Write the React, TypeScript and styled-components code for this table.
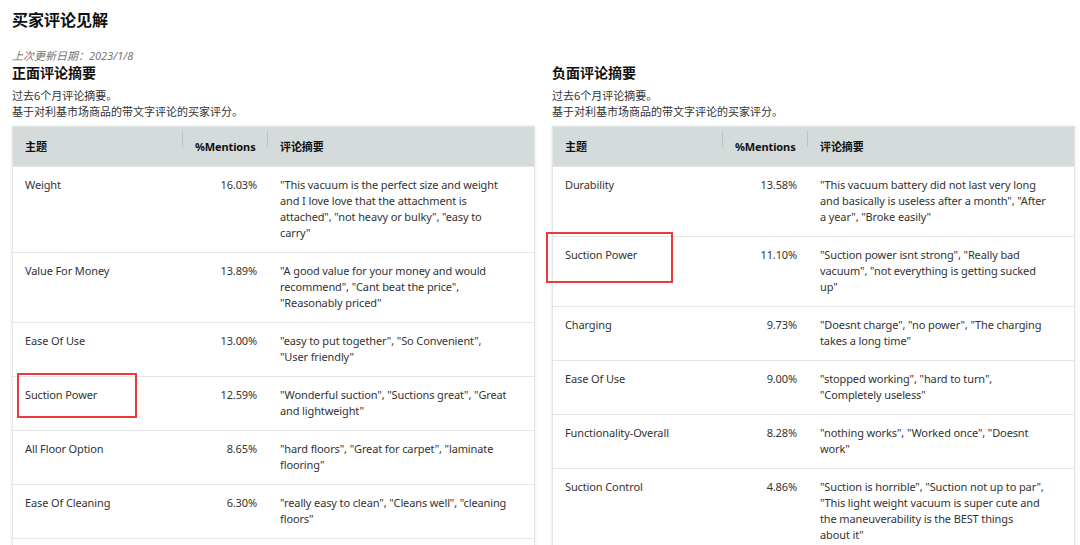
import React from "react";
import styled, { createGlobalStyle } from "styled-components";

type Row = {
  topic: string;
  pct: string;
  summary: string;
  mark?: { left: number; top: number; width: number; height: number };
};

const GlobalStyle = createGlobalStyle`
  body {
    margin: 0;
    background: #ffffff;
    font-family: "Noto Sans", "Noto Sans CJK SC", sans-serif;
    color: #0f1111;
  }
`;

const Page = styled.div`
  padding: 9px 5px 0 12px;
  width: 1080px;
  box-sizing: border-box;
`;

const Title = styled.h2`
  margin: 0;
  font-size: 16px;
  line-height: 22px;
  font-weight: 700;
  color: #0f1111;
`;

const UpdatedAt = styled.div`
  margin-top: 18px;
  font-size: 11px;
  line-height: 14px;
  font-style: italic;
  color: #767676;
`;

const Columns = styled.div`
  display: grid;
  grid-template-columns: 523px 523px;
  column-gap: 17px;
`;

const Section = styled.section`
  display: flex;
  flex-direction: column;
`;

const SectionTitle = styled.h3`
  margin: 0;
  font-size: 14px;
  line-height: 19px;
  font-weight: 700;
  color: #0f1111;
`;

const Desc = styled.p`
  margin: 6px 0 6px;
  font-size: 11px;
  line-height: 16px;
  color: #333333;
`;

// table stretches so both panels run down to the same bottom
const Table = styled.div`
  flex: 1;
  border: 1px solid #e3e6e6;
  border-bottom: none;
  box-shadow: 0 0 3px rgba(0, 0, 0, 0.12);
  background: #ffffff;
`;

const TableRow = styled.div<{ $head?: boolean }>`
  display: grid;
  grid-template-columns: 170px 85px 1fr;
  background: ${(p) => (p.$head ? "#d5dbdb" : "#ffffff")};
  border-top: ${(p) => (p.$head ? "none" : "1px solid #e3e6e6")};
  ${(p) => (p.$head ? "height: 39px; align-items: center;" : "")}
  font-size: 11px;
  line-height: 16px;
  letter-spacing: -0.12px;
  &:last-child {
    border-bottom: 1px solid #e3e6e6;
  }
`;

const HeadCell = styled.div<{ $align?: string; $divider?: boolean }>`
  position: relative;
  font-weight: 700;
  color: #0f1111;
  text-align: ${(p) => p.$align || "left"};
  padding: 0 ${(p) => (p.$align === "right" ? "14px" : "12px")} 0 12px;
  &::before {
    content: "";
    display: ${(p) => (p.$divider ? "block" : "none")};
    position: absolute;
    left: -1px;
    top: -8px;
    height: 16px;
    width: 1px;
    background: #b9c3c4;
  }
`;

const Cell = styled.div<{ $align?: string }>`
  position: relative;
  padding: 10px ${(p) => (p.$align === "right" ? "11px" : "12px")} 11px 12px;
  text-align: ${(p) => p.$align || "left"};
  color: #333333;
`;

const SummaryCell = styled(Cell)`
  padding-left: 12px;
  padding-right: 24px;
`;

const Highlight = styled.span`
  position: absolute;
  border: 2px solid #ea3a3d;
  pointer-events: none;
`;

const positive: Row[] = [
  {
    topic: "Weight",
    pct: "16.03%",
    summary:
      '"This vacuum is the perfect size and weight and I love love that the attachment is attached", "not heavy or bulky", "easy to carry"',
  },
  {
    topic: "Value For Money",
    pct: "13.89%",
    summary:
      '"A good value for your money and would recommend", "Cant beat the price", "Reasonably priced"',
  },
  {
    topic: "Ease Of Use",
    pct: "13.00%",
    summary: '"easy to put together", "So Convenient", "User friendly"',
  },
  {
    topic: "Suction Power",
    pct: "12.59%",
    summary: '"Wonderful suction", "Suctions great", "Great and lightweight"',
    mark: { left: 4, top: -4, width: 116, height: 41 },
  },
  {
    topic: "All Floor Option",
    pct: "8.65%",
    summary: '"hard floors", "Great for carpet", "laminate flooring"',
  },
  {
    topic: "Ease Of Cleaning",
    pct: "6.30%",
    summary: '"really easy to clean", "Cleans well", "cleaning floors"',
  },
];

const negative: Row[] = [
  {
    topic: "Durability",
    pct: "13.58%",
    summary:
      '"This vacuum battery did not last very long and basically is useless after a month", "After a year", "Broke easily"',
  },
  {
    topic: "Suction Power",
    pct: "11.10%",
    summary:
      '"Suction power isnt strong", "Really bad vacuum", "not everything is getting sucked up"',
    mark: { left: -7, top: -5, width: 123, height: 47 },
  },
  {
    topic: "Charging",
    pct: "9.73%",
    summary: '"Doesnt charge", "no power", "The charging takes a long time"',
  },
  {
    topic: "Ease Of Use",
    pct: "9.00%",
    summary: '"stopped working", "hard to turn", "Completely useless"',
  },
  {
    topic: "Functionality-Overall",
    pct: "8.28%",
    summary: '"nothing works", "Worked once", "Doesnt work"',
  },
  {
    topic: "Suction Control",
    pct: "4.86%",
    summary:
      '"Suction is horrible", "Suction not up to par", "This light weight vacuum is super cute and the maneuverability is the BEST things about\u00a0it"',
  },
];

function SummaryTable({ rows }: { rows: Row[] }) {
  return (
    <Table>
      <TableRow $head>
        <HeadCell>主题</HeadCell>
        <HeadCell $align="right" $divider>
          %Mentions
        </HeadCell>
        <HeadCell $divider>评论摘要</HeadCell>
      </TableRow>
      {rows.map((r) => (
        <TableRow key={r.topic}>
          <Cell>
            {r.mark && (
              <Highlight
                style={{
                  left: r.mark.left,
                  top: r.mark.top,
                  width: r.mark.width,
                  height: r.mark.height,
                }}
              />
            )}
            {r.topic}
          </Cell>
          <Cell $align="right">{r.pct}</Cell>
          <SummaryCell>{r.summary}</SummaryCell>
        </TableRow>
      ))}
    </Table>
  );
}

export default function App() {
  return (
    <Page>
      <GlobalStyle />
      <Title>买家评论见解</Title>
      <UpdatedAt>上次更新日期：2023/1/8</UpdatedAt>
      <Columns>
        <Section>
          <SectionTitle>正面评论摘要</SectionTitle>
          <Desc>
            过去6个月评论摘要。
            <br />
            基于对利基市场商品的带文字评论的买家评分。
          </Desc>
          <SummaryTable rows={positive} />
        </Section>
        <Section>
          <SectionTitle>负面评论摘要</SectionTitle>
          <Desc>
            过去6个月评论摘要。
            <br />
            基于对利基市场商品的带文字评论的买家评分。
          </Desc>
          <SummaryTable rows={negative} />
        </Section>
      </Columns>
    </Page>
  );
}
